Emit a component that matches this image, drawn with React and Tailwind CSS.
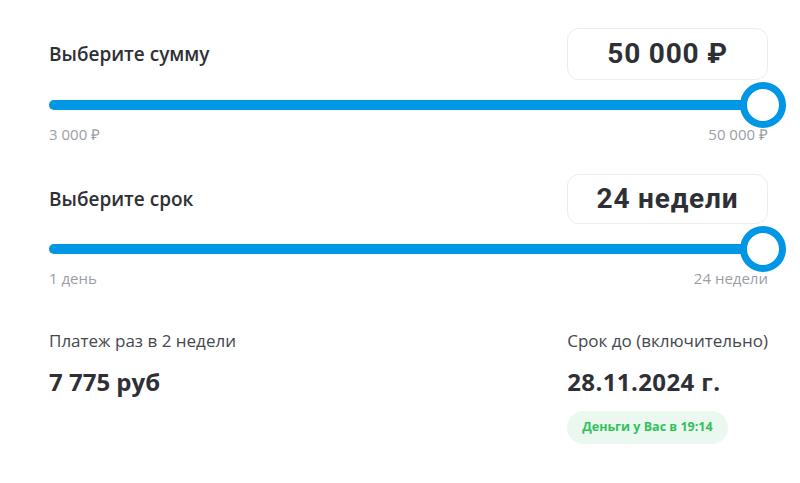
import { useState } from "react"

function Slider({ label, value, min, max, minLabel, maxLabel, boxH, mt }) {
  const pct = ((value - min) / (max - min)) * 100
  return (
    <div className={mt}>
      <div className="flex items-center justify-between">
        <p className="text-[19px] font-semibold text-[#2e3035]">{label}</p>
        <div className={`w-[201px] ${boxH} border border-[#ececec] rounded-[12px] flex items-center justify-center`}>
          <span className="font-['Roboto',sans-serif] font-bold text-[28px] text-[#2e3035] tracking-[0.8px]">{maxLabel}</span>
        </div>
      </div>
      <div className="relative h-[46px] mt-[2px] mr-[5px]">
        <div className="absolute left-0 right-0 top-1/2 -translate-y-1/2 h-[10px] rounded-full bg-[#e5e7eb]" />
        <div className="absolute left-0 top-1/2 -translate-y-1/2 h-[10px] rounded-full bg-[#0096e6]" style={{ width: `${pct}%` }} />
        <div className="absolute top-0 w-[46px] h-[46px] rounded-full border-[7px] border-[#0096e6] bg-white -translate-x-1/2" style={{ left: `${pct}%` }} />
      </div>
      <div className="flex justify-between -mt-[4px] text-[15px] leading-[20px] text-[#9a9ea5]">
        <span>{minLabel}</span>
        <span>{maxLabel}</span>
      </div>
    </div>
  )
}

export default function App() {
  const [amount] = useState(50000)
  const [weeks] = useState(24)

  return (
    <div className="w-[800px] h-[483px] bg-white font-['Open_Sans',sans-serif] pl-[49px] pr-[32px] pt-[28px]">
      <Slider label="Выберите сумму" value={amount} min={3000} max={50000} minLabel="3 000 ₽" maxLabel="50 000 ₽" boxH="h-[52px]" mt="" />
      <Slider label="Выберите срок" value={weeks} min={0} max={24} minLabel="1 день" maxLabel="24 недели" boxH="h-[50px]" mt="mt-[30px]" />

      <div className="flex justify-between mt-[41px]">
        <div>
          <p className="text-[17px] leading-[24px] text-[#44474c]">Платеж раз в 2 недели</p>
          <p className="text-[24px] leading-[32px] font-bold text-[#2e3035] mt-[13px]">7 775 руб</p>
        </div>
        <div>
          <p className="text-[17px] leading-[24px] text-[#44474c]">Срок до (включительно)</p>
          <p className="text-[24px] leading-[32px] font-bold text-[#2e3035] mt-[13px] tracking-[0.4px]">28.11.2024 г.</p>
          <div className="mt-[13px] inline-flex items-center h-[33px] px-[15px] rounded-full bg-[#eaf8ef]">
            <span className="text-[12.5px] font-bold text-[#2fc25b]">Деньги у Вас в 19:14</span>
          </div>
        </div>
      </div>
    </div>
  )
}
